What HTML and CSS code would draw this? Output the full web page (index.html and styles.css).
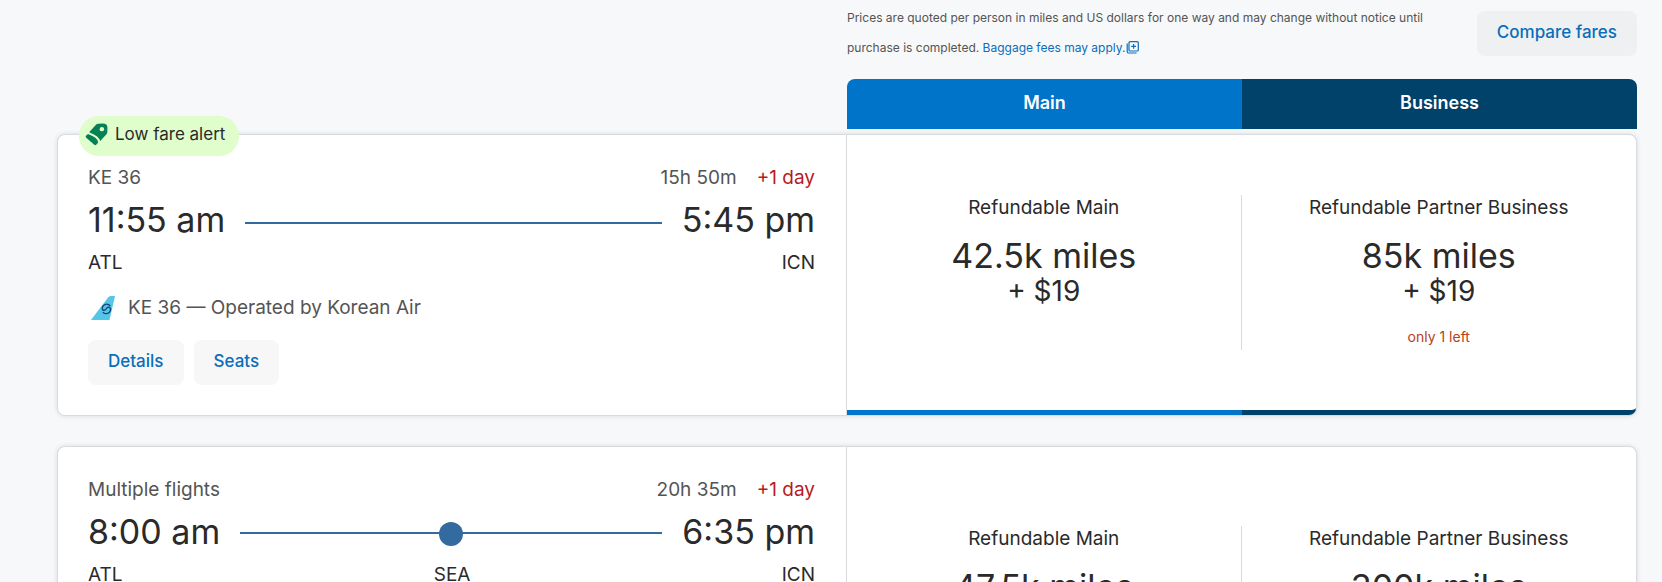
FILE: index.html
```html
<!DOCTYPE html>
<html lang="en">
<head>
<meta charset="utf-8">
<meta name="viewport" content="width=device-width, initial-scale=1">
<title>Flight results</title>
<link rel="stylesheet" href="styles.css">
</head>
<body>
<main class="results">
  <header class="results-head">
    <div class="notice">
      <p class="notice-text">Prices are quoted per person in miles and US dollars for one way and may change without notice until purchase is completed. <a class="notice-link" href="#baggage">Baggage fees may apply.<svg class="popup-icon" viewBox="0 0 13 13" aria-hidden="true"><rect x="3" y=".7" width="9.3" height="9.3" rx="1"/><path d="M1.2 2.6v8.2q0 1.2 1.2 1.2h8.2M7.6 3v4.8M5.2 5.4H10"/></svg></a></p>
      <button class="btn btn-compare" type="button">Compare fares</button>
    </div>
    <div class="cabins">
      <div class="cabin cabin-main">Main</div>
      <div class="cabin cabin-business">Business</div>
    </div>
  </header>

  <article class="card">
    <div class="badge">
      <svg class="badge-icon" viewBox="0 0 24 24" aria-hidden="true"><path class="tag" d="M11.200 2.200Q12.200 1 14 .9L18.500 .6Q23.400 .6 23.400 5L23.300 9.200Q23.300 10.800 22.200 12L15.800 18.800Q14.900 15.800 12.600 14Q10 12 4.800 10Q4.300 9.800 4.800 9.200Z"/><path class="tag" d="M3.200 11.400Q8.500 13.500 10.800 15.500Q13.400 17.500 13.700 20.300L12.300 22.300Q11 23.800 9.400 22.500L1.300 15.500Q0 14.300 1.200 13.100Z"/><circle class="hole" cx="17.600" cy="6.400" r="2.300"/></svg>
      <span>Low fare alert</span>
    </div>
    <section class="trip">
      <div class="row meta"><span>KE 36</span><span class="duration">15h 50m <strong class="plus-day">+1 day</strong></span></div>
      <div class="row times"><span>11:55 am</span><span class="route"></span><span>5:45 pm</span></div>
      <div class="row airports"><span>ATL</span><span>ICN</span></div>
      <div class="operator">
        <svg class="tail-icon" viewBox="0 0 24 24" aria-hidden="true"><path class="tail" d="M0 24L17 1.500Q18 0 19.600 0H24L18.500 24Z"/><path class="mark" d="M19.300 10Q17.500 7.800 14.500 8.300Q11.300 9.200 11.200 12.300Q11.300 14.500 13.600 14.200Q15.300 13.700 15.700 12.200Q17.200 10.400 19 11.700Q20.500 13.800 18.400 16.200Q15 19 11.700 16.200"/></svg>
        <span>KE 36 — Operated by Korean Air</span>
      </div>
      <div class="actions">
        <button class="btn" type="button">Details</button>
        <button class="btn" type="button">Seats</button>
      </div>
    </section>
    <section class="fares">
      <div class="fare fare-main">
        <div class="fare-body"><span class="fare-name">Refundable Main</span><span class="miles">42.5k miles</span><span class="cash">+ $19</span></div>
      </div>
      <div class="fare fare-business">
        <div class="fare-body"><span class="fare-name">Refundable Partner Business</span><span class="miles">85k miles</span><span class="cash">+ $19</span><span class="left">only 1 left</span></div>
      </div>
    </section>
  </article>

  <article class="card card-tall">
    <section class="trip">
      <div class="row meta"><span>Multiple flights</span><span class="duration">20h 35m <strong class="plus-day">+1 day</strong></span></div>
      <div class="row times"><span>8:00 am</span><span class="route route-stop"></span><span>6:35 pm</span></div>
      <div class="row airports"><span>ATL</span><span>SEA</span><span>ICN</span></div>
    </section>
    <section class="fares">
      <div class="fare fare-main">
        <div class="fare-body"><span class="fare-name">Refundable Main</span><span class="miles">47.5k miles</span></div>
      </div>
      <div class="fare fare-business">
        <div class="fare-body"><span class="fare-name">Refundable Partner Business</span><span class="miles">300k miles</span></div>
      </div>
    </section>
  </article>
</main>
</body>
</html>
```
FILE: styles.css
```css
:root {
  --blue: #0074c8;
  --navy: #00426a;
  --link: #0a6ebb;
  --ink: #2a2a2a;
  --muted: #545454;
  --line: #d9dbde;
}

* { box-sizing: border-box; }

body {
  margin: 0;
  height: 100vh;
  overflow: hidden;
  background: #f7f8fa;
  color: var(--ink);
  font: 400 19px/24px Inter, "Liberation Sans", sans-serif;
}

.results { padding: 0 25px 0 57px; }

.results-head { margin-left: 50%; }

.notice {
  display: flex;
  justify-content: space-between;
  align-items: flex-start;
  gap: 40px;
  height: 79px;
  padding-top: 3px;
}

.notice-text {
  flex: 1;
  margin: 0;
  color: var(--muted);
  font-size: 12px;
  line-height: 30px;
}

.notice-link { color: var(--link); text-decoration: none; }

.popup-icon {
  width: 13px;
  height: 13px;
  margin-left: 1px;
  vertical-align: -2px;
  fill: none;
  stroke: currentColor;
  stroke-width: 1.2;
}

.btn {
  height: 45px;
  padding: 0 20px 3px;
  border: 0;
  border-radius: 8px;
  background: #f7f7f7;
  color: var(--link);
  font: 500 17px/24px Inter, "Liberation Sans", sans-serif;
  white-space: nowrap;
}

.btn-compare { margin-top: 8px; background: #eff0f1; }

.cabins {
  display: grid;
  grid-template-columns: 1fr 1fr;
  margin-bottom: 5px;
  overflow: hidden;
  border-radius: 8px 8px 0 0;
}

.cabin {
  padding: 12px 0 14px;
  color: #fff;
  font-size: 18px;
  font-weight: 600;
  text-align: center;
}

.cabin-main { background: var(--blue); }
.cabin-business { background: var(--navy); }

.card {
  position: relative;
  display: grid;
  grid-template-columns: 1fr 1fr;
  margin-bottom: 30px;
  border: 1px solid var(--line);
  border-radius: 8px;
  background: #fff;
  box-shadow: 0 0 5px rgba(0, 0, 0, 0.12);
}

.card-tall { min-height: 320px; }

.badge {
  position: absolute;
  top: -19px;
  left: 21px;
  display: flex;
  align-items: center;
  gap: 7px;
  height: 40px;
  padding: 0 14px 4px 6px;
  border-radius: 20px;
  background: #e0fdcc;
  font-size: 17px;
}

.badge-icon { width: 23px; height: 23px; }
.tag { fill: #048055; }
.hole { fill: #e0fdcc; }

.trip {
  padding: 31px 31px 30px 30px;
  border-right: 1px solid var(--line);
}

.row { display: flex; justify-content: space-between; }
.meta { color: var(--muted); }
.duration { display: flex; gap: 20px; }
.plus-day { color: #b81a1c; font-weight: 400; }

.times {
  gap: 20px;
  margin: 8px 0 9px;
  font-size: 34px;
  line-height: 44px;
}

.route {
  position: relative;
  flex: 1;
  height: 2px;
  margin-top: 24px;
  background: #336a9f;
}

.route-stop { margin-top: 22px; }

.route-stop::after {
  content: "";
  position: absolute;
  top: -10px;
  left: calc(50% - 12px);
  width: 24px;
  height: 24px;
  border-radius: 50%;
  background: #336a9f;
}

.operator {
  display: flex;
  gap: 13px;
  margin: 21px 0 20px;
  padding-left: 3px;
  color: var(--muted);
}

.tail-icon { width: 24px; height: 24px; }
.tail { fill: #55c6e8; }
.mark { fill: none; stroke: #10447c; stroke-width: 1.3; }

.actions { display: flex; gap: 10px; }

.fares { display: grid; grid-template-columns: 1fr 1fr; }

.fare {
  display: flex;
  align-items: center;
  border-bottom: 5px solid;
}

.fare-main { border-color: var(--blue); }
.fare-business { border-color: var(--navy); border-bottom-right-radius: 7px; }

.fare-body {
  display: flex;
  flex: 1;
  flex-direction: column;
  align-items: center;
  min-height: 155px;
}

.fare-main .fare-body { border-right: 1px solid var(--line); }

.fare-name { line-height: 26px; }
.miles { margin-top: 18px; font-size: 34px; line-height: 34px; }
.cash { font-size: 28px; line-height: 37px; }
.left { margin-top: 16px; color: #b8401a; font-size: 14px; line-height: 22px; }
```
